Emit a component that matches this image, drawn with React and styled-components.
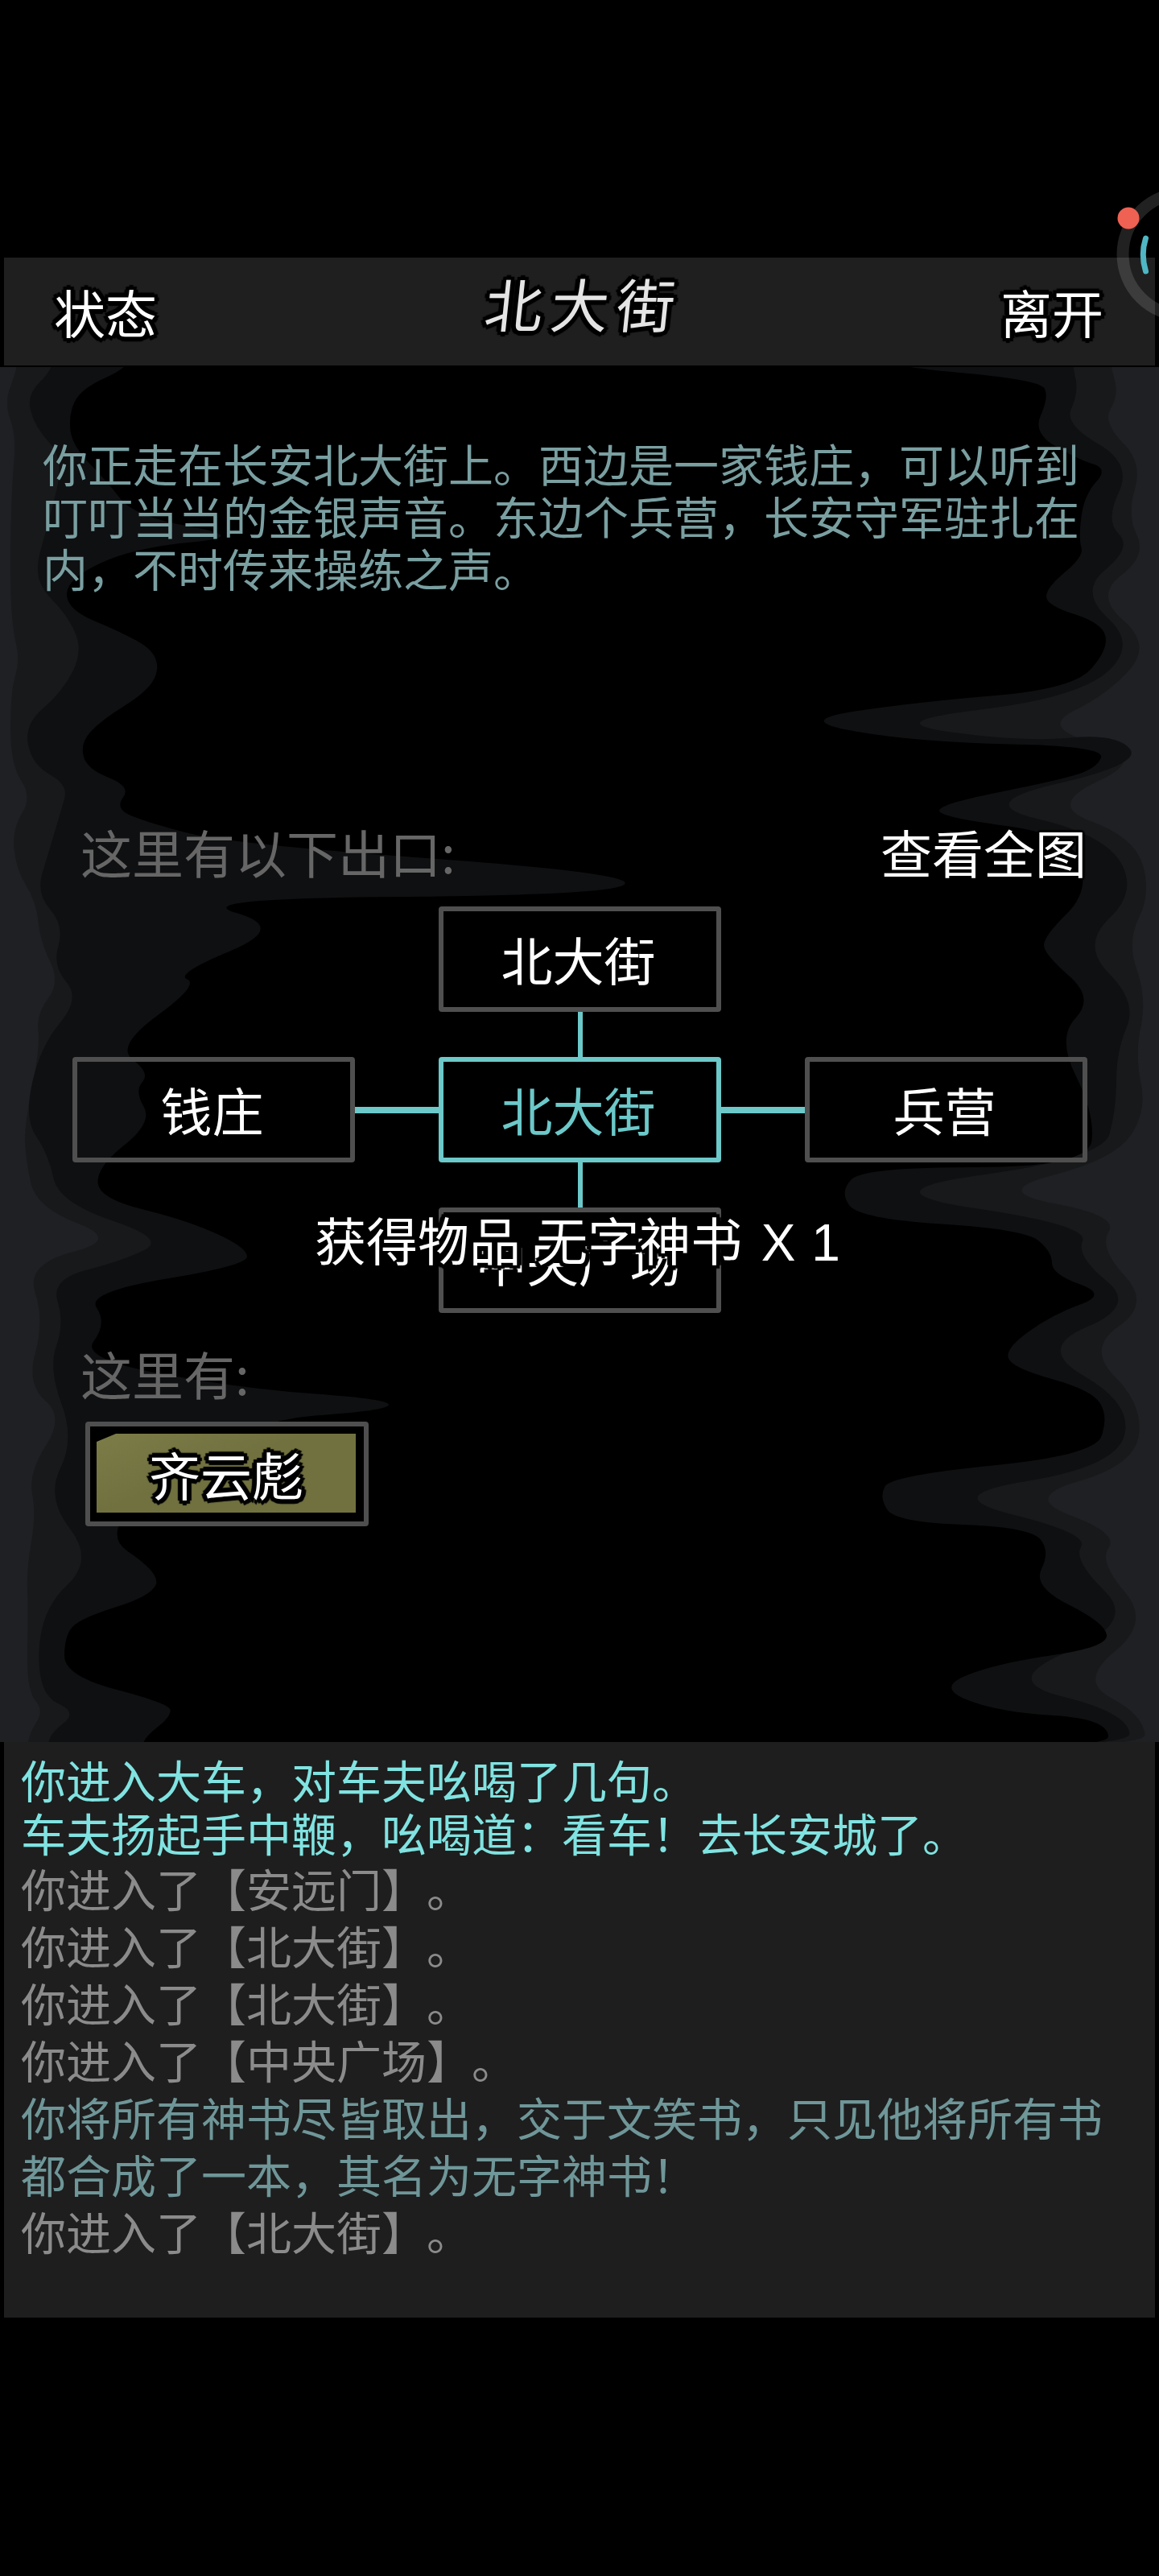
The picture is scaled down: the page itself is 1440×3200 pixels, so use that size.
import React from 'react';
import styled, {createGlobalStyle} from 'styled-components';

const FONT = `"Noto Sans CJK SC", "Noto Sans", sans-serif`;
const outline = (r, c = '#000') =>
  [[1, 0], [-1, 0], [0, 1], [0, -1], [.7, .7], [-.7, .7], [.7, -.7], [-.7, -.7]]
    .map(([x, y]) => `${x * r}px ${y * r}px 1px ${c}`).join(',');

const GlobalStyle = createGlobalStyle`
  html, body {
    margin: 0;
    background: #000;
  }
  * {
    box-sizing: border-box;
  }
`;

// ink wash edges, page coordinates, top to bottom
const INK = [
  {
    color: '#18191b',
    left: [[22, 440], [22, 458], [5, 500], [20, 540], [15, 600], [12, 700], [15, 780], [25, 820], [13, 860], [13, 950], [40, 990], [15, 1030], [20, 1080], [45, 1120], [50, 1170], [75, 1220], [45, 1260], [50, 1300], [30, 1400], [32, 1440], [45, 1500], [150, 1540], [32, 1570], [55, 1640], [33, 1720], [80, 1760], [35, 1830], [45, 1880], [33, 1950], [35, 2000], [33, 2100], [55, 2125], [35, 2155], [35, 2180]],
    right: [[1380, 440], [1380, 455], [1390, 490], [1370, 525], [1420, 575], [1400, 640], [1425, 690], [1360, 740], [1430, 800], [1380, 860], [1290, 905], [1430, 940], [1300, 1000], [1410, 1040], [1430, 1110], [1400, 1170], [1425, 1240], [1410, 1310], [1425, 1380], [1385, 1440], [1230, 1480], [1390, 1510], [1365, 1550], [1430, 1620], [1350, 1675], [1420, 1745], [1410, 1820], [1270, 1860], [1390, 1905], [1365, 1940], [1430, 2015], [1340, 2088], [1420, 2130], [1425, 2180]],
  },
  {
    color: '#0f1012',
    left: [[67, 440], [67, 458], [33, 490], [43, 530], [80, 570], [60, 650], [40, 720], [85, 765], [103, 810], [77, 860], [30, 900], [40, 950], [85, 975], [75, 1010], [60, 1060], [45, 1110], [80, 1150], [65, 1200], [100, 1240], [50, 1300], [30, 1390], [60, 1433], [73, 1494], [207, 1539], [153, 1566], [63, 1589], [80, 1644], [60, 1700], [93, 1788], [57, 1860], [117, 1938], [50, 2000], [47, 2105], [97, 2127], [60, 2155], [60, 2180]],
    right: [[1333, 440], [1333, 455], [1340, 488], [1322, 527], [1407, 576], [1373, 647], [1407, 680], [1340, 735], [1413, 801], [1340, 867], [1090, 897], [1273, 922], [1387, 911], [1420, 949], [1207, 998], [1373, 1037], [1413, 1108], [1343, 1174], [1413, 1245], [1387, 1306], [1387, 1378], [1370, 1439], [1070, 1480], [1353, 1522], [1337, 1561], [1413, 1622], [1287, 1675], [1407, 1744], [1387, 1822], [1163, 1858], [1353, 1905], [1333, 1938], [1413, 2016], [1240, 2088], [1400, 2127], [1407, 2180]],
  },
  {
    color: '#000',
    left: [[163, 440], [163, 455], [100, 483], [85, 516], [90, 554], [133, 598], [167, 642], [310, 667], [167, 680], [83, 719], [83, 757], [150, 785], [190, 807], [198, 834], [180, 861], [127, 894], [100, 922], [107, 955], [163, 977], [143, 1004], [177, 1020], [283, 1048], [790, 1085], [762, 1112], [230, 1116], [357, 1152], [217, 1210], [248, 1223], [143, 1300], [187, 1333], [167, 1355], [190, 1394], [120, 1450], [123, 1489], [233, 1516], [307, 1550], [307, 1572], [107, 1605], [133, 1644], [100, 1688], [300, 1725], [483, 1738], [483, 1752], [300, 1765], [117, 1899], [200, 1955], [187, 1983], [100, 2010], [80, 2032], [80, 2082], [210, 2116], [213, 2132], [177, 2160], [177, 2180]],
    right: [[1103, 440], [1103, 455], [1293, 472], [1303, 494], [1283, 538], [1340, 571], [1377, 582], [1347, 615], [1340, 669], [1347, 691], [1300, 730], [1300, 752], [1370, 774], [1377, 807], [1333, 856], [1140, 872], [985, 895], [1140, 922], [1373, 927], [1363, 955], [1307, 971], [1167, 999], [1167, 1015], [1333, 1037], [1353, 1108], [1297, 1163], [1297, 1185], [1360, 1240], [1313, 1289], [1360, 1383], [1353, 1450], [1073, 1450], [1043, 1480], [1067, 1514], [1273, 1527], [1307, 1555], [1307, 1583], [1377, 1608], [1307, 1633], [1247, 1677], [1260, 1700], [1357, 1727], [1377, 1760], [1360, 1808], [1107, 1833], [1092, 1860], [1113, 1891], [1280, 1897], [1305, 1927], [1283, 1971], [1373, 2016], [1377, 2046], [1240, 2066], [1163, 2096], [1240, 2127], [1377, 2135], [1377, 2180]],
  },
];

const smooth = (pts) => {
  let d = `M${pts[0][0]} ${pts[0][1]}`;
  for (let i = 1; i < pts.length - 1; i++) {
    const mx = (pts[i][0] + pts[i + 1][0]) / 2;
    const my = (pts[i][1] + pts[i + 1][1]) / 2;
    d += `Q${pts[i][0]} ${pts[i][1]} ${mx} ${my}`;
  }
  const last = pts[pts.length - 1];
  return `${d}L${last[0]} ${last[1]}Z`;
};

const InkWash = () => (
  <InkSvg viewBox="0 456 1440 1708" preserveAspectRatio="none">
    <rect x="0" y="440" width="1440" height="1740" fill="#1e2023"/>
    {INK.map((layer) => (
      <path
        key={layer.color}
        fill={layer.color}
        d={smooth([...layer.left, ...[...layer.right].reverse()])}
      />
    ))}
  </InkSvg>
);

const FloatBall = () => (
  <BallSvg viewBox="0 0 100 240">
    <circle cx="131" cy="86" r="76" fill="none" stroke="rgba(255,255,255,.13)" strokeWidth="15"/>
    <path d="M83.5 66Q77 86 83.5 107" fill="none" stroke="#4fb6c4" strokeWidth="7" strokeLinecap="round"/>
    <circle cx="62" cy="41" r="13.5" fill="#ef6152"/>
  </BallSvg>
);

const LOG = [
  {text: '你进入大车，对车夫吆喝了几句。', tone: 'cyan', tight: true},
  {text: '车夫扬起手中鞭，吆喝道：看车！去长安城了。', tone: 'cyan', tight: true},
  {text: '你进入了【安远门】。', tone: 'grey'},
  {text: '你进入了【北大街】。', tone: 'grey'},
  {text: '你进入了【北大街】。', tone: 'grey'},
  {text: '你进入了【中央广场】。', tone: 'grey'},
  {text: '你将所有神书尽皆取出，交于文笑书，只见他将所有书都合成了一本，其名为无字神书！', tone: 'teal'},
  {text: '你进入了【北大街】。', tone: 'grey'},
];

const App = () => (
  <Page>
    <GlobalStyle/>
    <FloatBall/>
    <Header>
      <HeaderButton>状态</HeaderButton>
      <Title>北大街</Title>
      <HeaderButton>离开</HeaderButton>
    </Header>
    <Room>
      <InkWash/>
      <RoomContent>
        <Description>
          你正走在长安北大街上。西边是一家钱庄，可以听到叮叮当当的金银声音。东边个兵营，长安守军驻扎在内，不时传来操练之声。
        </Description>
        <ExitsRow>
          <Label>这里有以下出口:</Label>
          <MapLink>查看全图</MapLink>
        </ExitsRow>
        <ExitGrid>
          <Node $col={3} $row={1}>北大街</Node>
          <VLine $row={2}/>
          <Node $col={1} $row={3}>钱庄</Node>
          <HLine $col={2}/>
          <Node $col={3} $row={3} $current>北大街</Node>
          <HLine $col={4}/>
          <Node $col={5} $row={3}>兵营</Node>
          <VLine $row={4}/>
          <Node $col={3} $row={5}>中央广场</Node>
        </ExitGrid>
        <HereLabel>这里有:</HereLabel>
        <NpcButton>
          <NpcFill>齐云彪</NpcFill>
        </NpcButton>
      </RoomContent>
      <Toast>获得物品 无字神书 <Latin>X 1</Latin></Toast>
    </Room>
    <LogPanel>
      {LOG.map((line, i) => (
        <LogLine key={i} $tone={line.tone} $tight={line.tight}>{line.text}</LogLine>
      ))}
    </LogPanel>
  </Page>
);

const Page = styled.div`
  position: relative;
  width: 1440px;
  height: 3200px;
  padding-top: 320px;
  background: #000;
  font-family: ${FONT};
  text-spacing-trim: space-all;
  overflow: hidden;
`;
const BallSvg = styled.svg`
  position: absolute;
  z-index: 3;
  top: 230px;
  right: 0;
  width: 100px;
  height: 240px;
  pointer-events: none;
`;
const Header = styled.header`
  height: 134px;
  margin: 0 5px;
  padding: 0 64px 0 62px;
  display: flex;
  align-items: center;
  justify-content: space-between;
  background: #1f1f1f;
`;
const HeaderButton = styled.div`
  font-size: 64px;
  line-height: 1;
  margin-top: -2px;
  color: #fff;
  text-shadow: ${outline(6)};
`;
const Title = styled.div`
  font-size: 72px;
  line-height: 1;
  letter-spacing: 10px;
  margin-top: -22px;
  margin-left: 14px;
  color: #e4e4e4;
  text-shadow: ${outline(6)};
  transform: skewX(-6deg);
`;
const Room = styled.main`
  position: relative;
  height: 1708px;
  margin-top: 2px;
  overflow: hidden;
`;
const InkSvg = styled.svg`
  position: absolute;
  inset: 0;
  width: 100%;
  height: 100%;
`;
const RoomContent = styled.div`
  position: relative;
  padding: 86px 53px 0;
`;
const Description = styled.p`
  margin: 0;
  font-size: 56px;
  line-height: 65px;
  color: #7a9fa1;
`;
const ExitsRow = styled.div`
  margin: 288px 0 37px;
  padding: 0 37px 0 47px;
  display: flex;
  justify-content: space-between;
  align-items: center;
  height: 64px;
`;
const Label = styled.div`
  font-size: 64px;
  line-height: 64px;
  color: #666;
`;
const MapLink = styled.div`
  font-size: 64px;
  line-height: 64px;
  color: #fff;
  text-shadow: ${outline(3)};
`;
const ExitGrid = styled.div`
  margin-left: 37px;
  display: grid;
  grid-template-columns: 351px 104px 351px 104px 351px;
  grid-template-rows: 131px 56px 131px 56px 131px;
  width: 1261px;
`;
// the ink wash shows through the node boxes
const Node = styled.div`
  grid-column: ${(p) => p.$col};
  grid-row: ${(p) => p.$row};
  display: flex;
  align-items: center;
  justify-content: center;
  padding: 0 4px 4px 0;
  border: 6px solid ${(p) => (p.$current ? '#6cc8c9' : '#4f4f4f')};
  border-radius: 4px;
  font-size: 64px;
  color: ${(p) => (p.$current ? '#6cc8c9' : '#fff')};
  text-shadow: ${outline(3)};
`;
const VLine = styled.div`
  grid-column: 3;
  grid-row: ${(p) => p.$row};
  justify-self: center;
  width: 6px;
  background: #6cc8c9;
`;
const HLine = styled.div`
  grid-column: ${(p) => p.$col};
  grid-row: 3;
  align-self: center;
  height: 8px;
  background: #6cc8c9;
`;
const HereLabel = styled(Label)`
  margin: 42px 0 29px 47px;
`;
const NpcButton = styled.div`
  margin-left: 53px;
  width: 352px;
  height: 130px;
  padding: 9px 10px 11px 8px;
  border: 6px solid #4f4f4f;
  border-radius: 4px;
  background: #000;
`;
const NpcFill = styled.div`
  height: 100%;
  display: flex;
  align-items: center;
  justify-content: center;
  background: linear-gradient(160deg, #7c7c48, #717140 45%);
  clip-path: polygon(24px 0, 100% 0, 100% 100%, 0 100%, 0 10px);
  font-size: 64px;
  color: #fff;
  text-shadow: ${outline(6)};
`;
const Toast = styled.div`
  position: absolute;
  top: 1050px;
  left: 391px;
  white-space: nowrap;
  font-size: 64px;
  line-height: 64px;
  word-spacing: 5px;
  color: #fff;
  text-shadow: ${outline(6)}, ${outline(3)};
`;
const Latin = styled.span`
  margin-left: 4px;
  font-family: "Liberation Sans", sans-serif;
  word-spacing: 0;
  letter-spacing: 1px;
`;
const LogPanel = styled.section`
  height: 715px;
  margin: 0 5px;
  padding: 13px 28px 0 21px;
  background: #1e1e1e;
`;
const LOG_COLORS = {cyan: '#80e3e1', grey: '#8b8b8b', teal: '#6f9698'};
const LogLine = styled.div`
  font-size: 56px;
  line-height: ${(p) => (p.$tight ? 66 : 71)}px;
  color: ${(p) => LOG_COLORS[p.$tone]};
`;

export default App;
